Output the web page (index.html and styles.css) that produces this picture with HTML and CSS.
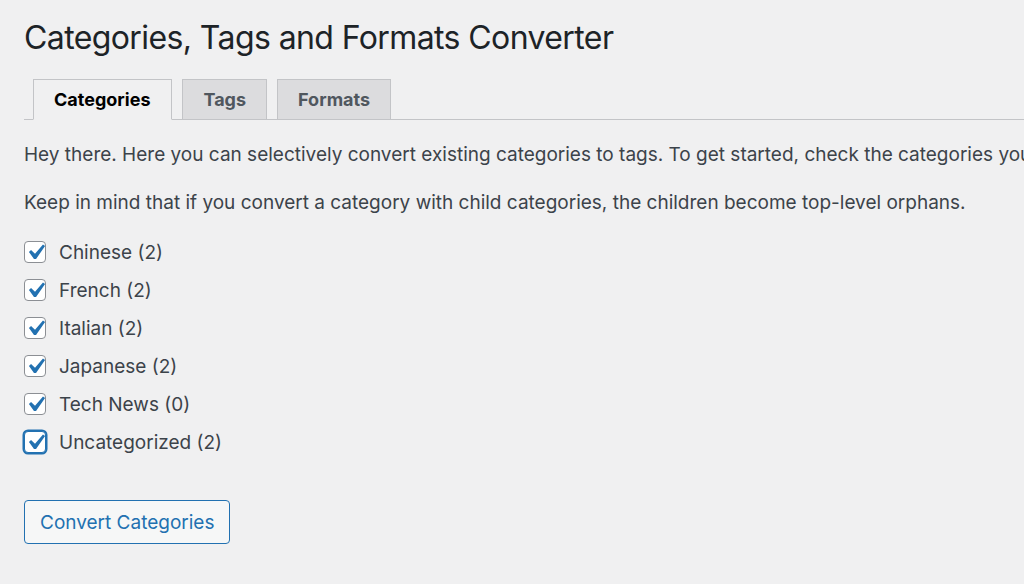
FILE: index.html
```html
<!DOCTYPE html>
<html lang="en">
<head>
  <meta charset="UTF-8">
  <title>Categories, Tags and Formats Converter</title>
  <link rel="stylesheet" href="styles.css">
</head>
<body>
  <div class="wrap">
    <h1>Categories, Tags and Formats Converter</h1>

    <nav class="nav-tab-wrapper">
      <a class="nav-tab active" href="#">Categories</a>
      <a class="nav-tab" href="#">Tags</a>
      <a class="nav-tab" href="#">Formats</a>
    </nav>

    <p>Hey there. Here you can selectively convert existing categories to tags. To get started, check the categories you want to convert, then click Convert.</p>
    <p>Keep in mind that if you convert a category with child categories, the children become top-level orphans.</p>

    <ul class="cat-list">
      <li><label><span class="check"><svg viewBox="0 0 20 20"><path d="M14.83 4.89l1.34.94-5.81 8.38H9.02L5.78 9.67l1.34-1.25 2.57 2.4z"/></svg></span>Chinese (2)</label></li>
      <li><label><span class="check"><svg viewBox="0 0 20 20"><path d="M14.83 4.89l1.34.94-5.81 8.38H9.02L5.78 9.67l1.34-1.25 2.57 2.4z"/></svg></span>French (2)</label></li>
      <li><label><span class="check"><svg viewBox="0 0 20 20"><path d="M14.83 4.89l1.34.94-5.81 8.38H9.02L5.78 9.67l1.34-1.25 2.57 2.4z"/></svg></span>Italian (2)</label></li>
      <li><label><span class="check"><svg viewBox="0 0 20 20"><path d="M14.83 4.89l1.34.94-5.81 8.38H9.02L5.78 9.67l1.34-1.25 2.57 2.4z"/></svg></span>Japanese (2)</label></li>
      <li><label><span class="check"><svg viewBox="0 0 20 20"><path d="M14.83 4.89l1.34.94-5.81 8.38H9.02L5.78 9.67l1.34-1.25 2.57 2.4z"/></svg></span>Tech News (0)</label></li>
      <li><label><span class="check focus"><svg viewBox="0 0 20 20"><path d="M14.83 4.89l1.34.94-5.81 8.38H9.02L5.78 9.67l1.34-1.25 2.57 2.4z"/></svg></span>Uncategorized (2)</label></li>
    </ul>

    <button class="button">Convert Categories</button>
  </div>
</body>
</html>
```

FILE: styles.css
```css
html, body {
  margin: 0;
  background: #f0f0f1;
}
body {
  font-family: Inter, "Liberation Sans", Arial, sans-serif;
  font-size: 19px;
  color: #3c434a;
  overflow: hidden;
}
.wrap {
  padding: 0 0 0 24px;
  white-space: nowrap;
}
h1 {
  margin: 0;
  padding: 19px 0 0;
  font-size: 32px;
  font-weight: 400;
  letter-spacing: -0.6px;
  line-height: 38px;
  color: #1d2327;
}
.nav-tab-wrapper {
  display: flex;
  gap: 10px;
  margin-top: 22px;
  padding-left: 9px;
  border-bottom: 1px solid #c3c4c7;
}
.nav-tab {
  display: block;
  height: 39px;
  line-height: 40px;
  padding: 0 20px;
  margin-bottom: -1px;
  font-size: 18px;
  font-weight: 700;
  text-decoration: none;
  color: #50575e;
  background: #dcdcde;
  border: 1px solid #c3c4c7;
  border-bottom: 0;
}
.nav-tab.active {
  padding: 0 21px 0 20px;
  color: #000;
  background: #f0f0f1;
  border-bottom: 1px solid #f0f0f1;
}
p {
  margin: 22px 0 0;
  line-height: 26px;
}
.cat-list {
  list-style: none;
  margin: 17px 0 0;
  padding: 0;
}
.cat-list li {
  height: 38px;
  display: flex;
  align-items: center;
}
.cat-list label {
  display: flex;
  align-items: center;
}
.check {
  box-sizing: border-box;
  width: 22px;
  height: 22px;
  margin-right: 13px;
  border: 1px solid #8c8f94;
  border-radius: 4px;
  background: #fff;
  display: flex;
  align-items: center;
  justify-content: center;
}
.check svg {
  width: 31px;
  height: 31px;
  fill: #2271b1;
  flex: none;
}
.check.focus {
  border-color: #2271b1;
  box-shadow: 0 0 0 1.5px #2271b1;
}
.button {
  margin-top: 39px;
  box-sizing: border-box;
  height: 44px;
  padding: 0 15px;
  font-family: inherit;
  font-size: 19px;
  color: #2271b1;
  background: #f6f7f7;
  border: 1px solid #2271b1;
  border-radius: 4px;
}
```
